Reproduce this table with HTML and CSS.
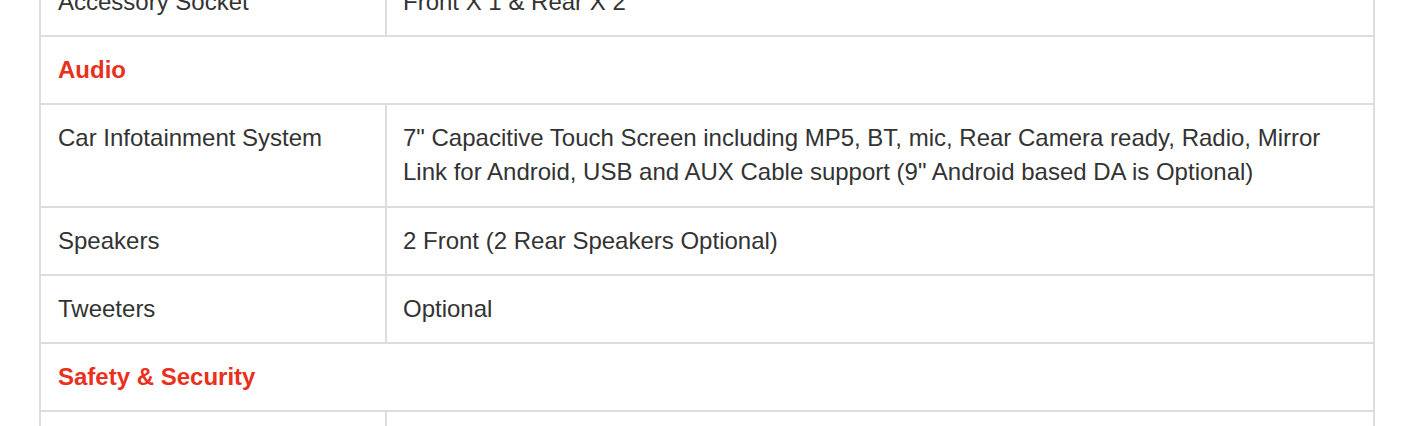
FILE: index.html
```html
<!DOCTYPE html>
<html lang="en">
<head>
  <meta charset="UTF-8">
  <meta name="viewport" content="width=device-width, initial-scale=1.0">
  <title>Specifications</title>
  <link rel="stylesheet" href="styles.css">
</head>
<body>

  <div class="container">
    <table class="spec-table">
      <tbody>
        <tr>
          <td class="spec-name">Accessory Socket</td>
          <td>Front X 1 &amp; Rear X 2</td>
        </tr>
        <tr class="spec-group">
          <td colspan="2">Audio</td>
        </tr>
        <tr>
          <td class="spec-name">Car Infotainment System</td>
          <td class="spec-long">7" Capacitive Touch Screen including MP5, BT, mic, Rear Camera ready, Radio, Mirror Link for Android, USB and AUX Cable support (9" Android based DA is Optional)</td>
        </tr>
        <tr>
          <td class="spec-name">Speakers</td>
          <td>2 Front (2 Rear Speakers Optional)</td>
        </tr>
        <tr>
          <td class="spec-name">Tweeters</td>
          <td>Optional</td>
        </tr>
        <tr class="spec-group">
          <td colspan="2">Safety &amp; Security</td>
        </tr>
        <tr>
          <td class="spec-name">Airbags</td>
          <td>Driver</td>
        </tr>
      </tbody>
    </table>
  </div>

</body>
</html>
```

FILE: styles.css
```css
/* General Styles */
body {
  font-family: 'Liberation Sans', Arial, sans-serif;
  background-color: #fff;
  margin: 0;
  padding: 0;
  overflow: hidden;
}

.container {
  padding-left: 39px;
  margin-top: -33px;
}

/* Table styles */
.spec-table {
  width: 1336px;
  border-collapse: collapse;
  table-layout: fixed;
  font-size: 24px;
  line-height: 34px;
  color: #333;
}

.spec-table td {
  padding: 16px 17px 16px 16px;
  border: 2px solid #ddd;
  vertical-align: top;
}

.spec-table td.spec-name {
  width: 310px;
  padding-left: 17px;
}

.spec-table td.spec-long {
  padding-bottom: 17px;
}

.spec-group td {
  color: #e8301c;
  font-weight: bold;
  padding-left: 17px;
}
```
